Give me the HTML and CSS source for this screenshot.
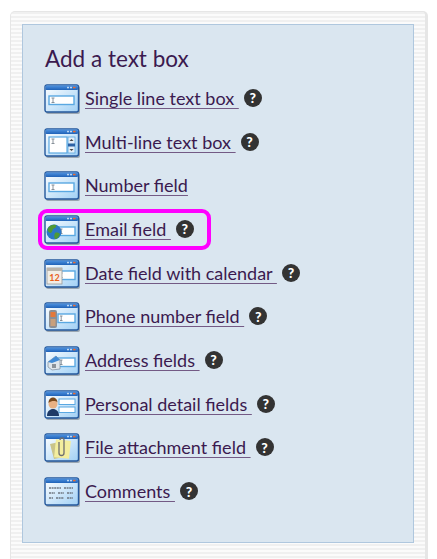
FILE: index.html
```html
<!DOCTYPE html>
<html lang="en">
<head>
    <meta charset="UTF-8">
    <title>Add a text box</title>
    <link rel="stylesheet" href="styles.css">
</head>
<body>
<svg class="defs" width="0" height="0">
    <defs>
        <linearGradient id="pane" x1="0" y1="0" x2="1" y2="1">
            <stop offset="0" stop-color="#ffffff"/>
            <stop offset="1" stop-color="#a0d0f5"/>
        </linearGradient>
        <linearGradient id="bar" x1="0" y1="0" x2="0" y2="1">
            <stop offset="0" stop-color="#4f93e0"/>
            <stop offset="1" stop-color="#1f62b8"/>
        </linearGradient>
        <symbol id="win" viewBox="0 0 36 30">
            <rect x="2" y="2" width="34" height="28" rx="2" fill="#7f8a96" opacity=".7"/>
            <rect x="1" y="1" width="33.500" height="27" rx="2" fill="url(#pane)" stroke="#24589c" stroke-width="1.400"/>
            <rect x="1.500" y="1.500" width="32.500" height="4.500" rx="1" fill="url(#bar)"/>
            <rect x="23" y="2.800" width="2" height="1.500" fill="#bcd7f2"/>
            <rect x="26" y="2.800" width="2" height="1.500" fill="#bcd7f2"/>
            <rect x="29" y="2.800" width="2.500" height="1.500" fill="#ee6a2a"/>
        </symbol>
        <symbol id="field" viewBox="0 0 36 30">
            <rect x="5" y="12" width="25" height="8.500" fill="#ffffff" stroke="#5aa8e2" stroke-width="1.400"/>
            <path d="M7.500 14h3M9 14v4.500M7.500 18.500h3" fill="none" stroke="#7d8790" stroke-width=".9"/>
        </symbol>
        <symbol id="field-short" viewBox="0 0 36 30">
            <rect x="14" y="12" width="17" height="8.500" fill="#ffffff" stroke="#5aa8e2" stroke-width="1.400"/>
            <path d="M16 14h2.500M17.200 14v4.500M16 18.500h2.500" fill="none" stroke="#7d8790" stroke-width=".9"/>
        </symbol>
    </defs>
</svg>

<div class="panel">
    <div class="inner">
        <h2>Add a text box</h2>
        <ul class="fields">
            <li class="row">
                <svg class="icon" viewBox="0 0 36 30"><use href="#win"/><use href="#field"/></svg>
                <a href="#">Single line text box&nbsp;</a>
                <span class="help">?</span>
            </li>
            <li class="row">
                <svg class="icon" viewBox="0 0 36 30">
                    <use href="#win"/>
                    <rect x="5" y="9" width="18" height="16" fill="#fff" stroke="#5aa8e2" stroke-width="1.200"/>
                    <path d="M7.500 11h3M9 11v4.500M7.500 15.500h3" fill="none" stroke="#7d8790" stroke-width=".9"/>
                    <rect x="24" y="9" width="7" height="16" fill="#e4eef7" stroke="#5aa8e2" stroke-width=".8"/>
                    <rect x="24" y="15.500" width="7" height="3" fill="#2c62a6"/>
                    <path d="M25.500 13h4l-2-2zM25.500 21h4l-2 2z" fill="#444"/>
                </svg>
                <a href="#">Multi-line text box&nbsp;</a>
                <span class="help">?</span>
            </li>
            <li class="row">
                <svg class="icon" viewBox="0 0 36 30"><use href="#win"/><use href="#field"/></svg>
                <a href="#">Number field</a>
            </li>
            <li class="row picked">
                <svg class="icon" viewBox="0 0 36 30">
                    <use href="#win"/><use href="#field-short"/>
                    <circle cx="10" cy="17" r="7.500" fill="#2b78c6"/>
                    <path d="M4 13c2-3 5-4 8-3 1 2-1 3-3 4-1 2-1 4-3 4-2-1-3-3-2-5zM11 18c2-1 4 0 5 1-1 3-3 5-5 5-1-2-1-4 0-6z" fill="#4f9a36"/>
                </svg>
                <a href="#">Email field&nbsp;</a>
                <span class="help">?</span>
            </li>
            <li class="row">
                <svg class="icon" viewBox="0 0 36 30">
                    <use href="#win"/><use href="#field-short"/>
                    <rect x="3" y="9" width="15" height="16" fill="#f1ede6" stroke="#9a9a9a" stroke-width=".8"/>
                    <rect x="3" y="9" width="15" height="3" fill="#b9b4ab"/>
                    <text class="cal-day" x="10.500" y="22">12</text>
                </svg>
                <a href="#">Date field with calendar&nbsp;</a>
                <span class="help">?</span>
            </li>
            <li class="row">
                <svg class="icon" viewBox="0 0 36 30">
                    <use href="#win"/><use href="#field-short"/>
                    <rect x="5" y="8" width="8" height="18" rx="2" fill="#8c8f94"/>
                    <rect x="6.500" y="10" width="5" height="5" fill="#e5793a"/>
                    <rect x="6.500" y="17" width="5" height="7" fill="#c9a07c"/>
                </svg>
                <a href="#">Phone number field&nbsp;</a>
                <span class="help">?</span>
            </li>
            <li class="row">
                <svg class="icon" viewBox="0 0 36 30">
                    <use href="#win"/><use href="#field-short"/>
                    <path d="M4 16l8-6 4 4v9l-8 1-4-3z" fill="#dfe6ec" stroke="#7b8a99" stroke-width=".7"/>
                    <path d="M4 16l8-6 4 4-8 3z" fill="#3f8ad6"/>
                    <rect x="8" y="18" width="4" height="4" fill="#8b9299"/>
                </svg>
                <a href="#">Address fields&nbsp;</a>
                <span class="help">?</span>
            </li>
            <li class="row">
                <svg class="icon" viewBox="0 0 36 30">
                    <use href="#win"/>
                    <rect x="15" y="9" width="16" height="5.500" fill="#fff" stroke="#5aa8e2"/>
                    <rect x="15" y="17" width="16" height="5.500" fill="#fff" stroke="#5aa8e2"/>
                    <path d="M3 26c0-5 3-7 6-7s6 2 6 7z" fill="#1f3a66"/>
                    <circle cx="9" cy="14" r="4.500" fill="#e8b184"/>
                    <path d="M4.500 13c0-4 2.500-5.500 4.500-5.500s4.500 1.500 4.500 5c-2-2-6-2-9 .5z" fill="#7a4a1e"/>
                </svg>
                <a href="#">Personal detail fields&nbsp;</a>
                <span class="help">?</span>
            </li>
            <li class="row">
                <svg class="icon" viewBox="0 0 36 30">
                    <use href="#win"/>
                    <path d="M6 11l14-3 4 15-14 3z" fill="#c9c48a"/>
                    <rect x="11" y="7" width="15" height="18" fill="#f3ee9e" transform="rotate(6 18 16)"/>
                    <path d="M15 9v11a2.500 2.500 0 0 0 5 0V7a2 2 0 0 0-4 0" fill="none" stroke="#6f6f6f" stroke-width="1.300"/>
                </svg>
                <a href="#">File attachment field&nbsp;</a>
                <span class="help">?</span>
            </li>
            <li class="row">
                <svg class="icon" viewBox="0 0 36 30">
                    <use href="#win"/>
                    <path d="M5 11h12M20 11h9M5 16h6M14 16h6M23 16h6M5 21h4M12 21h8M23 21h6" stroke="#6d7680" stroke-width="1.500" stroke-dasharray="2 .6"/>
                </svg>
                <a href="#">Comments&nbsp;</a>
                <span class="help">?</span>
            </li>
        </ul>
    </div>
</div>
</body>
</html>
```

FILE: styles.css
```css
html, body {
    height: 100%;
    margin: 0;
    overflow: hidden;
    background: #fff;
}
.defs {
    position: absolute;
}
.panel {
    height: 548px;
    margin: 11px 9px 0 10px;
    padding: 12px 11px 0 11px;
    box-sizing: border-box;
    border: 1px solid #e6e6e6;
    border-right: 3px solid #e6e6e6;
    border-bottom: 0;
    border-radius: 5px 5px 0 0;
    background: repeating-linear-gradient(#f0f0f0 0, #f0f0f0 2px, #fbfbfb 2px, #fbfbfb 4px);
}
.inner {
    height: 519px;
    box-sizing: border-box;
    padding: 19px 22px 0 22px;
    background: #dae6f0;
    border: 1px solid #afc7de;
    font-family: Lato, "Liberation Sans", sans-serif;
    color: #3b1a4f;
}
h2 {
    margin: 0 0 3px 0;
    font-size: 22.500px;
    font-weight: 400;
    line-height: 30px;
}
.fields {
    margin: 0 0 0 -1px;
    padding: 0;
    list-style: none;
}
.row {
    display: flex;
    align-items: center;
    height: 43.700px;
    width: max-content;
    font-size: 18px;
}
.icon {
    width: 36px;
    height: 30px;
    margin-right: 5px;
}
.cal-day {
    font-size: 9px;
    font-weight: 700;
    fill: #e8601c;
    text-anchor: middle;
}
.row a {
    margin-top: -2px;
    color: #3b1a4f;
    text-decoration: underline;
    text-decoration-color: #735a85;
    text-underline-offset: 3px;
}
.help {
    display: flex;
    align-items: center;
    justify-content: center;
    width: 18px;
    height: 18px;
    margin: -2px 0 0 5px;
    border-radius: 50%;
    background: #333;
    color: #fff;
    font-size: 14px;
    font-weight: 900;
}
.picked {
    height: 33px;
    margin: 5.350px 0 5.350px -2px;
    padding: 0 13px 0 2px;
    border-radius: 5px;
    outline: 4px solid #f0f;
}
```
